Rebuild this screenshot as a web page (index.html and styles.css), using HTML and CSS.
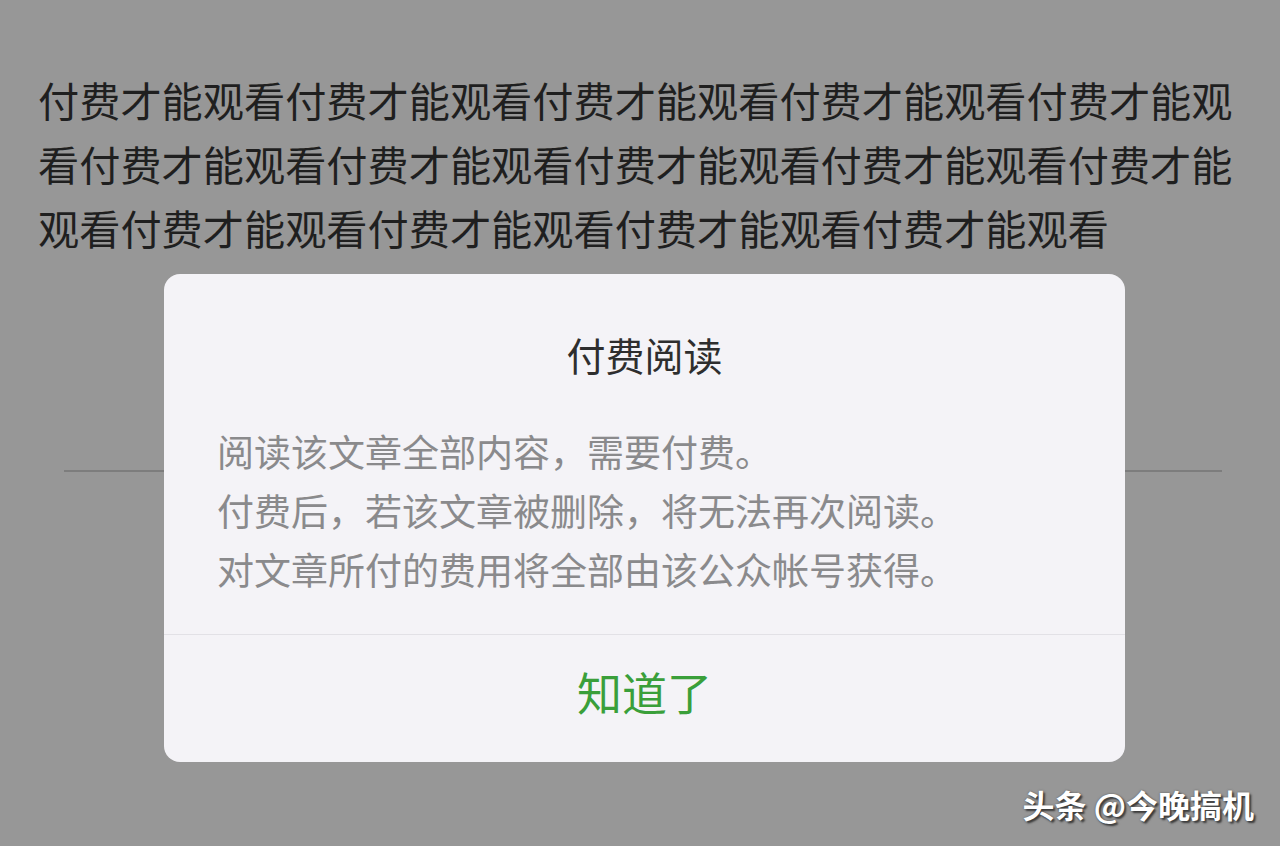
FILE: index.html
```html
<!DOCTYPE html>
<html lang="zh-CN">
<head>
<meta charset="utf-8">
<title>付费阅读</title>
<link rel="stylesheet" href="styles.css">
</head>
<body>
  <main class="article">
    <p class="article-text">付费才能观看付费才能观看付费才能观看付费才能观看付费才能观看付费才能观看付费才能观看付费才能观看付费才能观看付费才能观看付费才能观看付费才能观看付费才能观看付费才能观看</p>
    <hr class="article-rule">
  </main>

  <div class="dialog" role="dialog" aria-labelledby="dialog-title">
    <div class="dialog-body">
      <h2 class="dialog-title" id="dialog-title">付费阅读</h2>
      <p class="dialog-text">阅读该文章全部内容，需要付费。<br>付费后，若该文章被删除，将无法再次阅读。<br>对文章所付的费用将全部由该公众帐号获得。</p>
    </div>
    <button class="dialog-button" type="button">知道了</button>
  </div>

  <div class="watermark">头条 @今晚搞机</div>
</body>
</html>
```

FILE: styles.css
```css
html, body {
  margin: 0;
  padding: 0;
}

body {
  width: 1280px;
  height: 846px;
  overflow: hidden;
  position: relative;
  background: #979797;
  font-family: "Noto Sans CJK SC", "Noto Sans", sans-serif;
}

/* underlying article page */
.article {
  padding: 67px 0 0 38px;
}

.article-text {
  margin: 0;
  width: 1200px;
  font-size: 41.2px;
  line-height: 64px;
  color: #1f1f1f;
  word-break: break-all;
}

.article-rule {
  margin: 211px 0 0 26px;
  width: 1158px;
  height: 0;
  border: 0;
  border-top: 2px solid #7d7d7d;
}

/* modal dialog */
.dialog {
  position: absolute;
  left: 164px;
  top: 274px;
  width: 961px;
  height: 488px;
  display: flex;
  flex-direction: column;
  background: #f4f3f7;
  border-radius: 16px;
  overflow: hidden;
}

.dialog-body {
  padding: 52px 53px 35px;
  border-bottom: 1px solid #e2e1e6;
}

.dialog-title {
  margin: 0 0 40px;
  text-align: center;
  font-size: 39px;
  font-weight: 400;
  line-height: 56px;
  color: #2e2e2e;
}

.dialog-text {
  margin: 0;
  font-size: 37px;
  line-height: 59px;
  color: #8a8a8c;
}

.dialog-button {
  flex: 1;
  margin: 0;
  padding: 0 0 14px;
  border: 0;
  background: transparent;
  font-family: inherit;
  font-size: 45px;
  line-height: 60px;
  color: #3a9f3a;
  cursor: pointer;
}

/* corner watermark */
.watermark {
  position: absolute;
  right: 26px;
  bottom: 22px;
  font-size: 32px;
  font-weight: 700;
  line-height: 40px;
  color: #ffffff;
  text-shadow: 2px 2px 2px #3a3a3a, 0 0 2px #555;
  white-space: nowrap;
}
```
